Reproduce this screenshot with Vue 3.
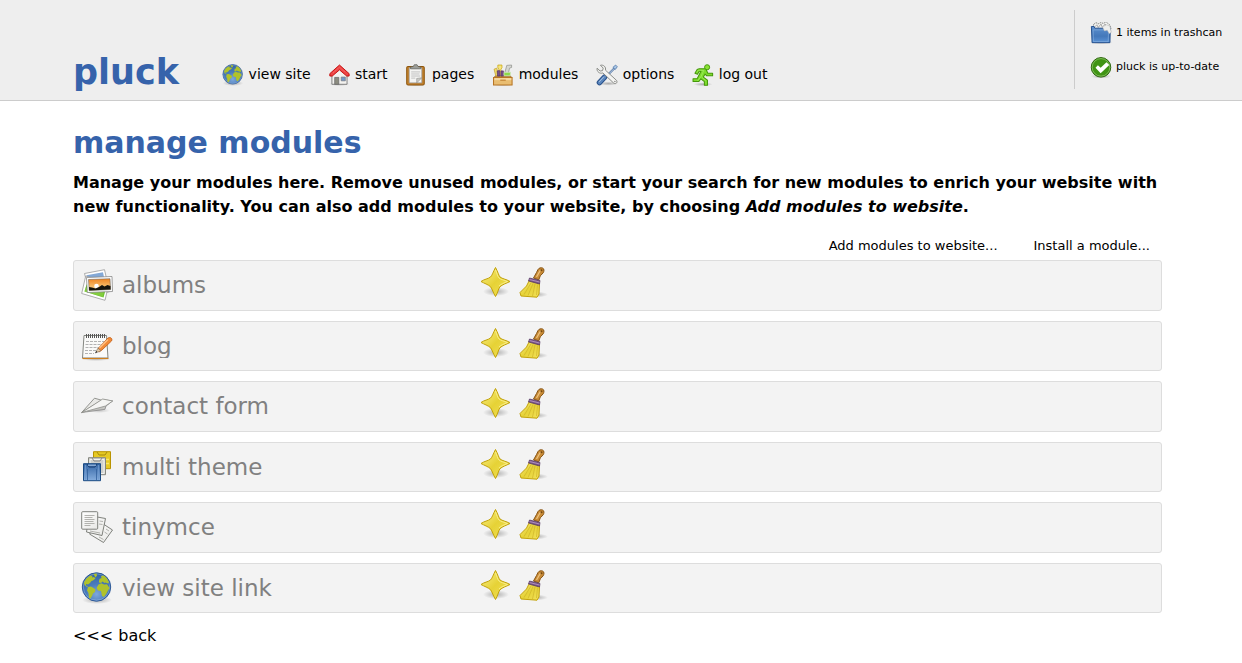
<script setup>
const nav = [
  { icon: 'globe', label: 'view site' },
  { icon: 'home', label: 'start' },
  { icon: 'clipboard', label: 'pages' },
  { icon: 'toolbox', label: 'modules' },
  { icon: 'tools', label: 'options' },
  { icon: 'runner', label: 'log out' },
]
const modules = [
  { icon: 'photos', name: 'albums' },
  { icon: 'notepad', name: 'blog' },
  { icon: 'plane', name: 'contact form' },
  { icon: 'themes', name: 'multi theme' },
  { icon: 'documents', name: 'tinymce' },
  { icon: 'globe', name: 'view site link' },
]
</script>

<template>
  <svg class="sprite" aria-hidden="true">
    <defs>
      <linearGradient id="gYellow" x1="0" y1="0" x2="1" y2="1">
        <stop offset="0" stop-color="#fbf08a" /><stop offset=".5" stop-color="#e6d236" /><stop offset="1" stop-color="#f3e25a" />
      </linearGradient>
      <linearGradient id="gBlue" x1="0" y1="0" x2="0" y2="1">
        <stop offset="0" stop-color="#3465a4" /><stop offset="1" stop-color="#86aede" />
      </linearGradient>
      <linearGradient id="gTrash" x1="0" y1="0" x2="0" y2="1">
        <stop offset="0" stop-color="#5d90cf" /><stop offset=".6" stop-color="#4478ba" /><stop offset="1" stop-color="#5b93d6" />
      </linearGradient>
      <linearGradient id="gSunset" x1="0" y1="0" x2="0" y2="1">
        <stop offset="0" stop-color="#ef8420" /><stop offset="1" stop-color="#fddb91" />
      </linearGradient>
      <linearGradient id="gPaper" x1="0" y1="0" x2="1" y2="1">
        <stop offset="0" stop-color="#fff" /><stop offset="1" stop-color="#e8e8e5" />
      </linearGradient>
      <radialGradient id="gSea" cx=".5" cy=".75" r=".7">
        <stop offset="0" stop-color="#7fa8db" /><stop offset=".5" stop-color="#497bbd" /><stop offset="1" stop-color="#3566a6" />
      </radialGradient>
      <radialGradient id="gShade">
        <stop offset="0" stop-color="#000" stop-opacity=".28" /><stop offset="1" stop-color="#000" stop-opacity="0" />
      </radialGradient>
    </defs>

    <symbol id="globe" viewBox="0 0 32 32">
      <ellipse cx="16" cy="28" rx="15" ry="4" fill="url(#gShade)" />
      <circle cx="15.500" cy="15" r="14.200" fill="url(#gSea)" stroke="#2b5796" />
      <circle cx="15.500" cy="15" r="13.200" fill="none" stroke="#9ebfe6" stroke-width=".7" opacity=".65" />
      <g fill="#b0c22b">
        <path d="M3 10.500 5 7l3.500-3 3-.5-.5 2 2-.5 1.500 1.500-2.500 2-1.500.5-1.500 2-2 1.500-2-.5v1.500l2 1-1 .5-2.500-2z" />
        <path d="m7 15 3-.5 2.500 1.500 2 1.500-.5 2.500-2 1.500-1 2.500-1.500 2.500-1.500-.5-.5-5-1.500-2.500z" />
        <path d="m12.500 2 3-.5.500 2-1.500 2z" />
        <path d="m18 9 .5-2 2-1-.5-2 3-.5 3 3 2 4-1.500 1-2-1-1 .5-2-1.500-1.500 1.500-2-.5z" />
        <path d="m17.500 12.500 3-1.200 2.500 1.200 3-.2 2.700 3.700-1.700 2.500-1.500 3-2.500 3.500-2-1-1-5-3-.5-1.500-2.500z" />
      </g>
    </symbol>

    <symbol id="home" viewBox="-.7 0 32 32">
      <ellipse cx="16" cy="29" rx="15" ry="3" fill="url(#gShade)" />
      <path d="M5 15.500v14h22v-14l-11-10z" fill="#f3f2ef" stroke="#777" stroke-width="1.300" />
      <path d="M9 19.500h6v10H9z" fill="#8c8c80" stroke="#666" />
      <path d="M18.500 19h6v5.500h-6z" fill="#7398c9" stroke="#77777a" />
      <path d="M2 17.500v-3.500L16 1.500 30 14v3.500h-3.500L16 8.500 5.500 17.500z" fill="#ee4545" stroke="#c40d0d" stroke-width="1.400" stroke-linejoin="round" />
      <path d="m7 12.500 9-8 9 8" fill="none" stroke="#ff8c8c" stroke-dasharray="2 2" />
    </symbol>

    <symbol id="clipboard" viewBox="0 0 32 32">
      <ellipse cx="16" cy="30" rx="15" ry="2.500" fill="url(#gShade)" />
      <rect x="2.500" y="3.500" width="25.500" height="27" rx="2" fill="#c6832c" stroke="#8b540c" stroke-width="1.500" />
      <path d="M6 5.500h18.500v22H6z" fill="#f4f4f2" stroke="#888" />
      <path d="m24.500 20-7.500 7.500V21z" fill="#c9c9c5" stroke="#8c8c88" stroke-width=".8" />
      <path d="M9 11.500h13M9 14.500h12M9 17.500h13M9 20.500h6" stroke="#aaa" />
      <path d="M8 7V4.500l4-1L13.500 1h4l1.500 2.500 4 1V7z" fill="#9b9d98" stroke="#5a5c58" stroke-linejoin="round" />
    </symbol>

    <symbol id="toolbox" viewBox="0 0 32 32">
      <ellipse cx="16" cy="30" rx="16" ry="2.500" fill="url(#gShade)" />
      <path d="M2.500 20 5 17h21.500l2.500 3z" fill="#b98643" stroke="#9c6422" />
      <path d="M8.500 1.500h6v4l-1.500 2v9h-3v-9l-1.500-2z" fill="#f5e582" stroke="#c6a000" />
      <path d="m3 7.500 4-1.500 2 10.500-3.500 1z" fill="#f2dd68" stroke="#c09e26" />
      <path d="m7.500 10 3.500-.5.5 8H8zM13 10h3.500v7.500H13z" fill="#76508b" stroke="#563265" />
      <path d="m18.500 13 3-11 7-.5V5l-3 1-2.500 11h-3z" fill="#d5d6d2" stroke="#8b8d87" />
      <path d="m17.500 12.500 9.500-.5-.5 5h-9z" fill="#8cda48" stroke="#cfe6bd" />
      <path d="M2.200 19.500h27v11h-27z" fill="#e9bd71" stroke="#b87523" stroke-width="1.500" />
      <path d="M3.500 20.500h24.500v3H3.500z" fill="#f7d99e" />
      <path d="M12 23.500h8" stroke="#b87523" stroke-width="1.400" />
    </symbol>

    <symbol id="tools" viewBox="0 0 32 32">
      <ellipse cx="18" cy="28.500" rx="14" ry="3" fill="url(#gShade)" />
      <path d="m27.500 5.500-12 12" stroke="#587caa" stroke-width="3" />
      <path d="m27 6-10 10" stroke="#e3ebf6" stroke-width="1" />
      <path d="m24.500 5 4-3.500L31 4l-3 4z" fill="#a9c5e5" stroke="#3b679f" />
      <path d="m5 27 7.500-8" stroke="#2a528b" stroke-width="8" stroke-linecap="round" />
      <path d="m5 27 7.500-8" stroke="#5c87be" stroke-width="5" stroke-linecap="round" />
      <path d="m4.500 26 7-7.500" stroke="#bdd3ec" stroke-width="1.200" />
      <path d="M6.500 1.800c4.500-1 8.300 2.500 7.300 7.200L30 24c1.600 3-1 5.600-4 4L10 13c-4.500 1.500-9-1.500-8.500-6.800l4.500 4 3.500-.5L10.500 6z" fill="#f4f4f2" stroke="#777974" stroke-width="1.200" stroke-linejoin="round" />
      <circle cx="27.500" cy="25.500" r="1.100" fill="#888" />
    </symbol>

    <symbol id="runner" viewBox="0 0 32 32">
      <ellipse cx="16" cy="29.500" rx="14" ry="2.800" fill="url(#gShade)" />
      <path d="M7.500 8 10.500 7h9.500l3 6.500h7v3.500H21l-2-2.500-2.500 4.500 6 4.500v7.500h-4.500v-5.500l-5-4-3 4H1.500v-4h6L13 10.500h-2.500L8 15l-3.700-1.500z" fill="#7ddc2f" stroke="#46980a" stroke-width="1.500" stroke-linejoin="round" />
      <path d="m7 12 2-3 8 .5-4 9-5 6M14 19l6 5" fill="none" stroke="#aaf06b" stroke-width=".9" />
      <circle cx="22" cy="4.700" r="3.700" fill="#8ae234" stroke="#46980a" stroke-width="1.400" />
    </symbol>

    <symbol id="trash" viewBox="0 0 32 32">
      <ellipse cx="16" cy="29.500" rx="17" ry="3.500" fill="url(#gShade)" />
      <path d="m4 11 1.500-8 3-2 4 1.500 3-1.500 4 1 4-2 3 2.500 2 1.500 2 5-2 4z" fill="#f3f3f1" stroke="#555853" stroke-dasharray="2 1" />
      <path d="m7 7 3-3 2 4 4-5 2 5 4-5 2 4" fill="none" stroke="#888" />
      <path d="M2 6.500h4L7 9h16l2-1 4.500.5L29 30H3z" fill="url(#gTrash)" stroke="#244f8c" stroke-width="1.400" />
      <path d="M4.500 11.500h22.500l-.5 17H5z" fill="none" stroke="#8fb5e2" stroke-width=".8" />
      <path d="m18 7 6-3 5 2 2 9-3 2-3-5-4 1z" fill="#eeeeec" stroke="#aaa" stroke-width=".7" />
    </symbol>

    <symbol id="check" viewBox="0 0 32 32">
      <ellipse cx="16" cy="29.500" rx="15" ry="3.500" fill="url(#gShade)" />
      <circle cx="16" cy="16.500" r="14.200" fill="#409414" stroke="#286008" stroke-width="1.400" />
      <circle cx="16" cy="16.500" r="12.800" fill="none" stroke="#a0d57e" stroke-width=".9" />
      <path d="m8 17 3.500-3.500 4 3.500L24 9l4 4-12.500 12z" fill="#fff" />
    </symbol>

    <symbol id="photos" viewBox="0 0 32 32">
      <path d="M3.500 4.500 23.500.7l5 22-19 4z" fill="#fff" stroke="#999" stroke-width=".8" />
      <path d="M5.500 6.300 22 3.200l1 5-17 3z" fill="#83a8d6" />
      <path d="m.7 24.500 4-17.500L28 14l-4 17.300z" fill="#fff" stroke="#999" stroke-width=".8" />
      <path d="m3.500 22.500 2-7L25 19l-2.500 9.500z" fill="#5ebb22" />
      <path d="m3.500 22.500 1-4 18.500 5-1 4.500z" fill="#a5dd58" opacity=".5" />
      <path d="M5.500 8.500 31 7.500l.5 15-25.200 1z" fill="#fff" stroke="#888" stroke-width=".8" />
      <path d="m7.500 10.500 21.500-.8.6 10.900-21.400 1z" fill="url(#gSunset)" stroke="#555" stroke-width=".5" />
      <circle cx="15.500" cy="17" r="2.300" fill="#fff" />
      <path d="m8 18 3 .5 3.500 1 3.500-1.500 3-2 2.500 1.500 3-1.500 3 1 .1 3.400-21.500 1z" fill="#17150d" />
    </symbol>

    <symbol id="notepad" viewBox="0 0 32 32">
      <ellipse cx="15" cy="29" rx="15" ry="2" fill="url(#gShade)" />
      <path d="M3 5.500h22.500l1.500 22.500H1.500z" fill="#fafaf9" stroke="#777974" stroke-width=".9" />
      <path d="M1.500 28.500h26" stroke="#d0801d" stroke-width="1.100" />
      <path d="M5.500 4v4M7.500 4v4M9.500 4v4M11.500 4v4M13.500 4v4M15.500 4v4M17.500 4v4M19.500 4v4M21.500 4v4M23.500 4v4" stroke="#555" stroke-width="1" />
      <path d="M5 11.500h18M4.500 14.500h17M4.500 17.500h14M4 20.500h12M4 23.500h9" stroke="#aaa" stroke-width=".9" stroke-dasharray="3 1" />
      <path d="m16 20.500 2.500-3.500L27 8c2-1.500 5 .5 3.500 3L21 20l-3 2z" fill="#f28b38" stroke="#bf5b11" stroke-width=".8" />
      <path d="m18.500 18 8.500-8.500" stroke="#ffc58b" stroke-width="1.200" />
      <path d="m14.500 23 2.300-4.800 3 2.500z" fill="#ead0a9" stroke="#666" stroke-width=".5" />
      <path d="m14.200 23.200 1-2.300 1.300 1.200z" fill="#222" />
    </symbol>

    <symbol id="plane" viewBox="0 0 32 32">
      <ellipse cx="18" cy="20.500" rx="11" ry="2.500" fill="url(#gShade)" opacity=".7" />
      <path d="M.7 22.500 24 19.300l1-3.300 6.500-5-9.500-1.500z" fill="#c6c6c2" stroke="#888" stroke-width=".8" stroke-linejoin="round" />
      <path d="M.7 22.500 13.500 8.200l7 2z" fill="#e9e9e6" stroke="#898a86" stroke-width=".9" stroke-linejoin="round" />
      <path d="m.7 22.500 21-13.500 10 2-7.200 5z" fill="#f5f5f3" stroke="#8e8f8a" stroke-width=".8" stroke-linejoin="round" />
    </symbol>

    <symbol id="themes" viewBox="0 0 32 32">
      <path d="M12.500.7h17v17h-17z" fill="#e6c924" stroke="#b99300" />
      <path d="M14 8.500h14M14 12.500h14" stroke="#f9e66b" stroke-width="1.500" /><path d="m16 1 2 3h6l2-3" fill="none" stroke="#a58a0b" />
      <path d="M7.500 6.700h17v17h-17z" fill="#cfd0cc" stroke="#85877f" />
      <path d="M9 8.500h14v14H9z" fill="none" stroke="#f3f3f1" /><path d="m11 7 2 3h6l2-3" fill="none" stroke="#888" />
      <path d="M2.500 12.700h17v17h-17z" fill="url(#gBlue)" stroke="#194982" />
      <path d="M4.500 14v14.500M17.500 14v14.500" stroke="#6f99ce" stroke-width=".8" /><path d="M6.500 18V29M15.500 18V29" stroke="#315f9c" stroke-width=".8" /><path d="m6 13 2 3h6l2-3" fill="none" stroke="#163d70" />
      <path d="M7 14.200h8" stroke="#a9c5e8" />
    </symbol>

    <symbol id="documents" viewBox="0 0 32 32">
      <g fill="url(#gPaper)" stroke="#73756f" stroke-width=".9" stroke-linejoin="round">
        <path d="m20 11.500 11.500 7.500-9 12.500L8.500 23z" />
        <path d="M8 4.500 24.500 7.500l-3.500 17L5.500 21z" />
        <rect x=".7" y=".7" width="16" height="17.500" rx="1" />
      </g>
      <path d="M3.500 4.500h10M3.500 6.500h8M3.500 8.500h10M3.500 10.500h9M3.500 12.500h10M3.500 14.500h6M18.500 10l3.500.5M18 13l3.500.5M9 20l10 2M25 18l3 2M23.500 21l3 2M18 26l4.500 2.500" stroke="#aaaaa6" stroke-width=".9" />
    </symbol>

    <symbol id="star" viewBox="0 0 32 32">
      <ellipse cx="16" cy="25.500" rx="13" ry="4.500" fill="url(#gShade)" />
      <path d="M15.500 1.500C18 6 18.500 9 20 11c2.500 2 6 2 10 4.500-4 2-7.500 3-10 5.200-2 2.800-2 5.800-4.500 9.800-2.500-4-3-7-5-9.800-2.500-2.200-6-3.200-9.500-5.200C4.500 13 8 13 10.500 11c2-2 2.500-5 5-9.500z" fill="url(#gYellow)" stroke="#c1a10a" stroke-linejoin="round" />
      <path d="M15.500 4C17 7 17.300 10 19 12c2 1.700 5 2 8.500 3.500C24 17 21 18 19 20" fill="none" stroke="#fff6a5" stroke-width=".9" opacity=".8" />
    </symbol>

    <symbol id="broom" viewBox="0 0 32 32">
      <ellipse cx="18" cy="28.500" rx="12" ry="3" fill="url(#gShade)" />
      <path d="m15.500 12 3-5.500L20 3.500C21 1.800 23 1.500 24.500 2c2 .8 1.600 3.200.8 4.700l-3 3.100-1.500 4z" fill="#c78a36" stroke="#875414" />
      <path d="m18.500 11 4-7" stroke="#eec17b" stroke-width="1.300" />
      <circle cx="23.500" cy="4.200" r="1" fill="#74470f" />
      <path d="m11.500 14-3 6-6.500 6.500L3 30l16 1.200L21 28l.5-10.500z" fill="url(#gYellow)" stroke="#c2a20c" stroke-linejoin="round" />
      <path d="M13 17 6 28.500M15 17.500l-5 12M17 18l-2.500 12M19.500 18.500 18.500 29" stroke="#cfb52a" stroke-width=".7" />
      <path d="m11.500 12 10.500 2.500-.5 3.500-11-3z" fill="#7b5789" stroke="#50325d" stroke-width=".7" />
      <path d="m11.500 13.500 10 2.500" stroke="#c3a4ce" stroke-width=".7" />
    </symbol>
  </svg>

  <header class="header">
    <div class="brand">pluck</div>
    <nav class="nav">
      <a v-for="n in nav" :key="n.label" class="nav-item">
        <svg class="icon-s"><use :href="'#' + n.icon" /></svg><span>{{ n.label }}</span>
      </a>
    </nav>
    <aside class="status">
      <a class="status-item"><svg class="icon-s"><use href="#trash" /></svg><span>1 items in trashcan</span></a>
      <a class="status-item"><svg class="icon-s"><use href="#check" /></svg><span>pluck is up-to-date</span></a>
    </aside>
  </header>

  <main class="content">
    <h1>manage modules</h1>
    <p class="intro">Manage your modules here. Remove unused modules, or start your search for new modules to enrich your website with new functionality. You can also add modules to your website, by choosing <em>Add modules to website</em>.</p>
    <div class="links"><a>Add modules to website...</a><a>Install a module...</a></div>
    <div v-for="m in modules" :key="m.name" class="row">
      <svg class="icon"><use :href="'#' + m.icon" /></svg>
      <span class="name">{{ m.name }}</span>
      <svg class="icon action"><use href="#star" /></svg>
      <svg class="icon action"><use href="#broom" /></svg>
    </div>
    <a class="back">&lt;&lt;&lt; back</a>
  </main>
</template>

<style>
html, body { background: #fff; overflow: hidden; }
#app { font-family: "DejaVu Sans", sans-serif; color: #000; }
</style>

<style scoped>
.sprite { position: absolute; width: 0; height: 0; }
svg { display: block; flex: none; }
.header { height: 100px; display: flex; background: #eee; border-bottom: 1px solid #ccc; }
.brand { width: 149px; padding: 52px 0 0 73px; box-sizing: border-box; flex: none; font-size: 35px; line-height: 41px; font-weight: bold; color: #3663ab; }
.nav { display: flex; gap: 17.8px; padding: 64px 0 0 73px; font-size: 14px; line-height: 20px; }
.nav-item { display: flex; gap: 4.6px; height: 22px; }
.icon-s { width: 22px; height: 22px; }
.status { margin: 10px 0 11px auto; width: 168px; box-sizing: border-box; border-left: 1px solid #ccc; padding: 12px 0 0 15px; display: flex; flex-direction: column; gap: 12px; font-size: 11px; line-height: 22px; }
.status-item { display: flex; gap: 4px; height: 22px; white-space: nowrap; }
.content { padding: 0 80px 0 73px; }
h1 { margin: 0; padding-top: 22px; font-size: 30px; line-height: 40px; color: #3663ab; }
.intro { margin: 8px 0 0; font-size: 16px; line-height: 24px; font-weight: bold; }
.links { display: flex; justify-content: flex-end; gap: 36px; padding: 17px 12px 0 0; font-size: 13px; line-height: 20px; margin-bottom: 4.4px; }
.row { height: 50.5px; box-sizing: border-box; margin-bottom: 10px; display: flex; align-items: flex-start; padding: 8px 7px; border: 1px solid #ddd; border-radius: 3px; background: #f3f3f3; }
.name { width: 358px; margin-left: 9px; height: 28px; padding-top: 3px; box-sizing: border-box; overflow: hidden; font-size: 23px; line-height: 27px; color: #808080; }
.icon { width: 32px; height: 32px; }
.action { margin: -3px 6px 0 0; }
.back { display: block; padding-top: 1px; font-size: 16px; line-height: 24px; }
</style>
